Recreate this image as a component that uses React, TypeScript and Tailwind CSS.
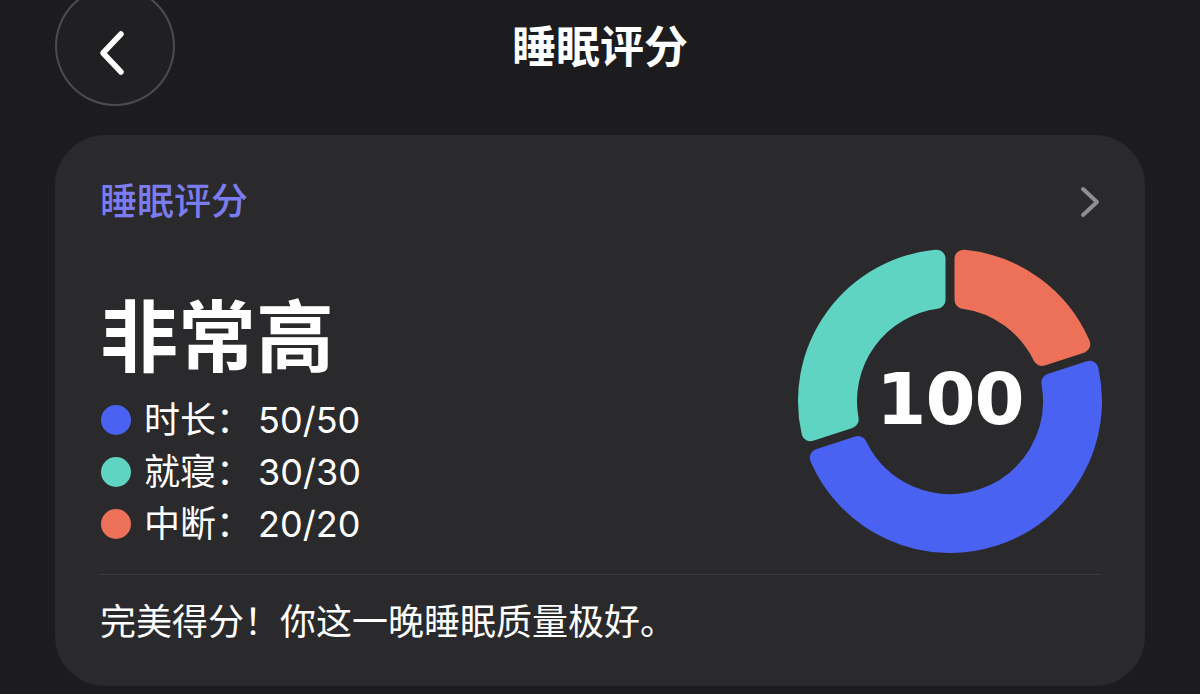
const FONT = "font-['Inter','Noto_Sans_CJK_SC',sans-serif]"

// ring geometry, angles in degrees clockwise from 12 o'clock
const SIZE = 306
const C = SIZE / 2
const OUTER = 152
const INNER = 93
const GAP = 9
const CORNER = 9

const pt = (deg: number, r: number) => {
  const a = (deg * Math.PI) / 180
  return `${(C + r * Math.sin(a)).toFixed(2)} ${(C - r * Math.cos(a)).toFixed(2)}`
}

function segmentPath(a0: number, a1: number) {
  const ro = OUTER - CORNER
  const ri = INNER + CORNER
  const d = GAP / 2 + CORNER
  const oo = (Math.asin(d / ro) * 180) / Math.PI
  const io = (Math.asin(d / ri) * 180) / Math.PI
  const large = a1 - a0 - 2 * oo > 180 ? 1 : 0
  return [
    `M ${pt(a0 + oo, ro)}`,
    `A ${ro} ${ro} 0 ${large} 1 ${pt(a1 - oo, ro)}`,
    `L ${pt(a1 - io, ri)}`,
    `A ${ri} ${ri} 0 ${large} 0 ${pt(a0 + io, ri)}`,
    'Z',
  ].join(' ')
}

const parts = [
  { label: '时长', score: 50, max: 50, color: '#4a62f2', dot: 'bg-[#4a62f2]' },
  { label: '就寝', score: 30, max: 30, color: '#60d4c3', dot: 'bg-[#60d4c3]' },
  { label: '中断', score: 20, max: 20, color: '#ec7158', dot: 'bg-[#ec7158]' },
]

function ScoreRing({ total }: { total: number }) {
  // interruption starts at the top, then duration, then bedtime
  const order = [parts[2], parts[0], parts[1]]
  let start = 0
  const arcs = order.map((p) => {
    const span = (p.max / 100) * 360
    const arc = { color: p.color, d: segmentPath(start, start + span) }
    start += span
    return arc
  })

  return (
    <div className="grid place-items-center -mr-[3px]">
      <svg
        width={SIZE}
        height={SIZE}
        viewBox={`0 0 ${SIZE} ${SIZE}`}
        className="[grid-area:1/1]"
      >
        {arcs.map((a, i) => (
          <path
            key={i}
            d={a.d}
            fill={a.color}
            stroke={a.color}
            strokeWidth={CORNER * 2}
            strokeLinejoin="round"
          />
        ))}
      </svg>
      <span className="[grid-area:1/1] -mt-[4px] font-['DejaVu_Sans',sans-serif] text-[72px] font-bold leading-none tracking-[-1px] text-white">
        {total}
      </span>
    </div>
  )
}

export default function App() {
  return (
    <div className={`min-h-screen overflow-hidden bg-[#1c1c1e] text-white ${FONT}`}>
      {/* Top bar */}
      <header className="grid grid-cols-[1fr_auto_1fr] items-start">
        <button className="ml-[55px] -mt-[14px] flex h-[120px] w-[120px] items-center justify-center rounded-full border-2 border-white/20 bg-[#202022]">
          <svg width="40" height="60" viewBox="0 0 40 60" className="mt-[14px] -ml-[4px]">
            <path
              d="M28 11 L10 30 L28 49"
              fill="none"
              stroke="white"
              strokeWidth="5.5"
              strokeLinecap="round"
              strokeLinejoin="round"
            />
          </svg>
        </button>
        <h1 className="text-[44px] font-semibold leading-[94px]">睡眠评分</h1>
        <div />
      </header>

      {/* Score card */}
      <section className="mx-[55px] mt-[29px] rounded-[50px] bg-[#2a2a2c] pl-[45px] pr-[45px] pt-[45px] pb-[42px]">
        <div className="flex items-center justify-between">
          <h2 className="text-[37px] font-medium leading-[44px] text-[#7a7cf0]">睡眠评分</h2>
          <svg width="24" height="36" viewBox="0 0 24 36" className="-mr-[2px]">
            <path
              d="M5 5 L19 18 L5 31"
              fill="none"
              stroke="#8e8e93"
              strokeWidth="4"
              strokeLinecap="round"
              strokeLinejoin="round"
            />
          </svg>
        </div>

        <div className="mt-[24px] flex items-end justify-between">
          <div className="pb-[4px]">
            <p className="text-[78px] font-bold leading-[90px]">非常高</p>
            <ul className="mt-[11px]">
              {parts.map((p) => (
                <li key={p.label} className="flex h-[52px] items-center gap-[13px] text-[36px]">
                  <span className={`ml-[1px] h-[30px] w-[30px] rounded-full ${p.dot}`} />
                  <span>
                    {p.label}：<span className="ml-[6px]">{p.score}/{p.max}</span>
                  </span>
                </li>
              ))}
            </ul>
          </div>
          <ScoreRing total={100} />
        </div>

        <div className="mt-[20px] h-px bg-[#3d3d40]" />
        <p className="mt-[25px] text-[36px] leading-[44px]">完美得分！你这一晚睡眠质量极好。</p>
      </section>
    </div>
  )
}
